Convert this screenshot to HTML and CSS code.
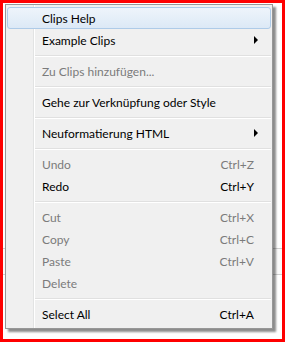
FILE: index.html
```html
<!DOCTYPE html>
<html lang="de">
<head>
    <meta charset="UTF-8">
    <title>Clips Kontextmenü</title>
    <link rel="stylesheet" href="styles.css">
</head>
<body>

    <div class="frame">
        <div class="menu">
            <div class="item active"><span>Clips Help</span></div>
            <div class="item"><span>Example Clips</span><i class="arrow"></i></div>
            <div class="sep"></div>
            <div class="item disabled"><span>Zu Clips hinzufügen...</span></div>
            <div class="sep"></div>
            <div class="item"><span>Gehe zur Verknüpfung oder Style</span></div>
            <div class="sep"></div>
            <div class="item"><span>Neuformatierung HTML</span><i class="arrow"></i></div>
            <div class="sep"></div>
            <div class="item disabled"><span>Undo</span><span class="key">Ctrl+Z</span></div>
            <div class="item"><span>Redo</span><span class="key">Ctrl+Y</span></div>
            <div class="sep"></div>
            <div class="item disabled"><span>Cut</span><span class="key">Ctrl+X</span></div>
            <div class="item disabled"><span>Copy</span><span class="key">Ctrl+C</span></div>
            <div class="item disabled"><span>Paste</span><span class="key">Ctrl+V</span></div>
            <div class="item disabled"><span>Delete</span></div>
            <div class="sep"></div>
            <div class="item"><span>Select All</span><span class="key">Ctrl+A</span></div>
        </div>
    </div>

</body>
</html>
```

FILE: styles.css
```css
body {
    margin: 0;
    background: #fff;
    font-family: Lato, "Open Sans", sans-serif;
    font-size: 12px;
    color: #000;
}
.frame {
    width: 279px;
    height: 336px;
    border: 3px solid #f00;
    /* window lines showing behind the menu */
    background: linear-gradient(#fff 245px, #cfcfcf 245px, #cfcfcf 246px, #fafafa 246px, #fafafa 271px, #cfcfcf 271px, #cfcfcf 272px, #fff 272px);
}
.menu {
    width: 266px;
    margin: 1px 0 0 2px;
    padding: 2px 0 3px;
    border: 1px solid #979797;
    background: linear-gradient(to right, #f0f0f0 27px, #e2e3e3 27px, #e2e3e3 28px, #fff 28px, #fff 29px, #f0f0f0 29px);
    box-shadow: 3px 3px 2px rgba(0, 0, 0, 0.45);
}
.item {
    display: flex;
    justify-content: space-between;
    align-items: center;
    height: 22px;
    margin: 0 1px;
    padding: 0 16px 0 34px;
    border: 1px solid transparent;
    border-radius: 3px;
    box-sizing: border-box;
    white-space: nowrap;
}
.item.active {
    border-color: #aecbe8;
    background: linear-gradient(#eef4fb, #dce9f6);
}
.item.disabled {
    color: #7b7b7b;
}
.arrow {
    width: 0;
    height: 0;
    margin-right: -4px;
    border-top: 4px solid transparent;
    border-bottom: 4px solid transparent;
    border-left: 4px solid #000;
}
.sep {
    height: 9px;
    margin-left: 29px;
    margin-right: 1px;
    background: linear-gradient(#f0f0f0 4px, #e0e0e0 4px, #e0e0e0 5px, #fff 5px, #fff 6px, transparent 6px);
}
```
